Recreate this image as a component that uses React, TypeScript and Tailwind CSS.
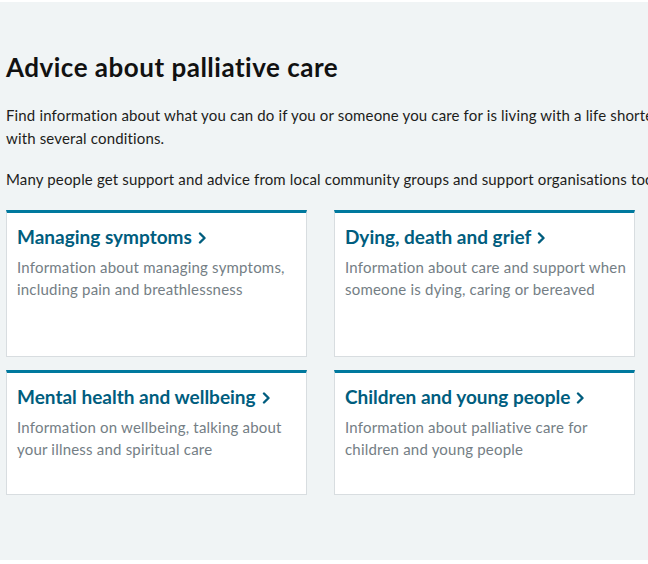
import React from 'react';

const CARDS = [
  {
    title: 'Managing symptoms',
    text: 'Information about managing symptoms, including pain and breathlessness',
  },
  {
    title: 'Dying, death and grief',
    text: 'Information about care and support when someone is dying, caring or bereaved',
  },
  {
    title: 'Mental health and wellbeing',
    text: 'Information on wellbeing, talking about your illness and spiritual care',
  },
  {
    title: 'Children and young people',
    text: 'Information about palliative care for children and young people',
  },
];

function Chevron() {
  return (
    <svg width="9" height="12" viewBox="0 0 9 12" className="inline-block ml-[6px] -mt-[2px]" aria-hidden="true">
      <path d="M2 1.5 L6.5 6 L2 10.5" fill="none" stroke="currentColor" strokeWidth="2.4" strokeLinecap="round" strokeLinejoin="round" />
    </svg>
  );
}

function TopicCard({ title, text, tall }: { title: string; text: string; tall: boolean }) {
  return (
    <a
      href="#"
      className={`block bg-white border border-[#d8dde0] border-t-[3px] border-t-[#00799e] pl-[10px] pr-[4px] pt-[11px] ${tall ? 'h-[147px]' : 'h-[125px]'}`}
    >
      <h3 className="text-[19px] leading-[26px] font-bold text-[#005d7e]">
        {title}
        <Chevron />
      </h3>
      <p className="mt-[6px] text-[15px] leading-[22px] tracking-[0.2px] text-[#747e85]">{text}</p>
    </a>
  );
}

export default function App() {
  return (
    <div className="bg-white pt-[2px] pb-[4px]" style={{ fontFamily: 'Lato, "Noto Sans", Arial, sans-serif' }}>
      <div className="h-[558px] overflow-hidden bg-[#f0f4f5] px-[6px] text-[#1d1d1b]">
        {/* Section heading */}
        <h2 className="mt-[49px] text-[26px] leading-[32px] font-bold tracking-[0.5px] text-[#111]">
          Advice about palliative care
        </h2>

        <div className="w-[900px] text-[15px] leading-[23px] tracking-[0.15px]">
          <p className="mt-[21px]">
            Find information about what you can do if you or someone you care for is living with a life shortening illness, or living
            <br />
            with several conditions.
          </p>
          <p className="mt-[18px] whitespace-nowrap">
            Many people get support and advice from local community groups and support organisations too.
          </p>
        </div>

        {/* Topic cards */}
        <div className="mt-[19px] grid grid-cols-[301px_301px] gap-x-[27px] gap-y-[13px]">
          {CARDS.map((c, i) => (
            <TopicCard key={c.title} title={c.title} text={c.text} tall={i < 2} />
          ))}
        </div>
      </div>
    </div>
  );
}
